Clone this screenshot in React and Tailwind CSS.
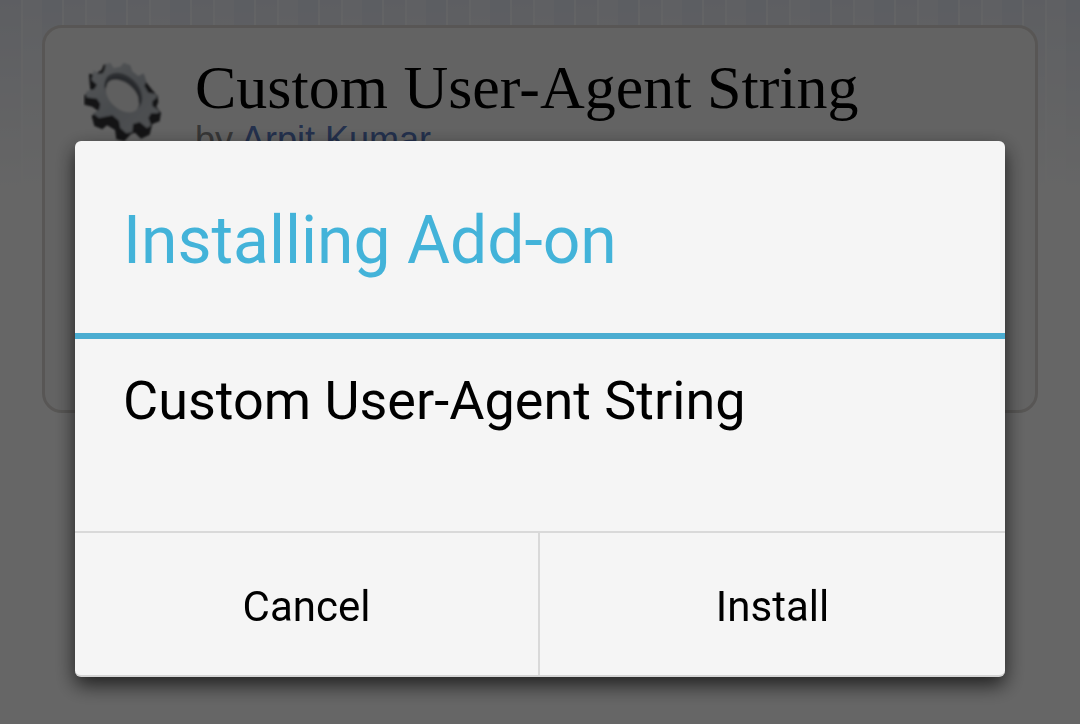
import { useState } from 'react'

const GearIcon = () => (
  <svg viewBox="40 30 240 246" className="mt-1 h-[82px] w-20 shrink-0" aria-hidden="true">
    <defs>
      <linearGradient id="gearFace" x1="0" y1="0" x2="1" y2="1">
        <stop offset="0" stopColor="#d4d9dd" />
        <stop offset="0.5" stopColor="#b4bac1" />
        <stop offset="1" stopColor="#c6cace" />
      </linearGradient>
      <filter id="gearSoft">
        <feGaussianBlur stdDeviation="3" />
      </filter>
    </defs>
    <g filter="url(#gearSoft)">
      {/* side walls */}
      <path
        fill="#303236"
        d="M58 72 L76 72 L96 60 L102 44 L112 42 L128 60 L160 50 L182 60 L190 76 L222 82 L232 100 L246 118 L264 138 L266 156 L260 170 L274 188 L270 214 L248 222 L240 254 L214 266 L196 248 L184 252 L164 274 L140 268 L136 240 L112 226 L98 238 L74 228 L66 198 L84 182 L68 170 L44 164 L44 136 L62 122 L60 100 Z"
      />
      {/* front face */}
      <path
        fill="url(#gearFace)"
        d="M72 60 L86 72 L100 70 L106 58 L108 42 L122 38 L132 54 L152 50 L162 38 L182 46 L188 64 L206 78 L222 70 L230 92 L224 108 L236 128 L258 132 L262 142 L248 154 L248 168 L270 184 L264 190 L244 190 L236 204 L244 226 L232 234 L210 216 L190 222 L188 246 L170 250 L152 234 L148 212 L128 196 L106 200 L88 204 L70 190 L88 180 L92 162 L82 146 L50 142 L50 124 L74 118 L82 104 L66 90 Z"
      />
      <ellipse cx="161" cy="125" rx="66" ry="46" transform="rotate(45 161 125)" fill="#72777f" />
      <ellipse cx="158" cy="138" rx="59" ry="38" transform="rotate(43 158 138)" fill="#eeeeee" />
      <path fill="none" stroke="#5c6169" strokeWidth="6" d="M108 112 C108 84 140 76 168 88 C194 100 212 128 210 160" />
    </g>
  </svg>
)

const AddonCard = () => (
  <section className="mx-[42px] h-[388px] rounded-[20px] border-3 border-[#dbd8d4] bg-[#f8f8f8]">
    <div className="flex items-start gap-8 px-[38px] pt-7">
      <GearIcon />
      <div className="whitespace-nowrap">
        <h1 className="font-['Liberation_Serif',serif] text-[62px] leading-[62px] text-black">
          Custom User-Agent String
        </h1>
        <p className="pt-1 font-['Liberation_Sans',sans-serif] text-[36px] leading-9 text-[#888888]">
          by <a href="#arpit-kumar" className="text-[#5a7ac0]">Arpit Kumar</a>
        </p>
      </div>
    </div>
  </section>
)

const InstallDialog = ({ onClose }) => (
  <div className="fixed inset-0 flex items-start justify-center bg-black/60 px-[75px] pt-[141px]">
    <div
      role="dialog"
      aria-modal="true"
      aria-labelledby="dialog-title"
      className="w-full rounded-md border-b-2 border-[#d4d4d4] bg-[#f5f5f5] shadow-[0_8px_20px_0_rgba(0,0,0,0.7)]"
    >
      <h2
        id="dialog-title"
        className="border-b-[6px] border-[#4badd1] px-12 pt-15 pb-13 text-[66px] leading-[80px] text-[#43b3d9]"
      >
        Installing Add-on
      </h2>
      <p className="px-12 pt-[30px] pb-[98px] text-[54px] leading-[64px] text-black">Custom User-Agent String</p>
      <div className="grid grid-cols-2 border-t-2 border-[#d9d9d9] text-[42px] leading-[48px] text-black">
        <button type="button" onClick={onClose} className="border-r-2 border-[#d9d9d9] pt-[50px] pb-11">
          Cancel
        </button>
        <button type="button" onClick={onClose} className="pt-[50px] pb-11">
          Install
        </button>
      </div>
    </div>
  </div>
)

const App = () => {
  const [open, setOpen] = useState(true)

  return (
    <div className="min-h-screen bg-white font-['Roboto',sans-serif]">
      {/* striped header band that fades out down the page */}
      <div className="bg-[linear-gradient(#ffffff00,#ffffff_195px),repeating-linear-gradient(90deg,#e9ecf5_0_21px,#f6f8fc_21px_23px,#edf0f7_23px_42px,#e6eaf4_42px_62px,#f6f8fc_62px_64px)] pt-[25px]">
        <AddonCard />
      </div>
      {open && <InstallDialog onClose={() => setOpen(false)} />}
    </div>
  )
}

export default App
